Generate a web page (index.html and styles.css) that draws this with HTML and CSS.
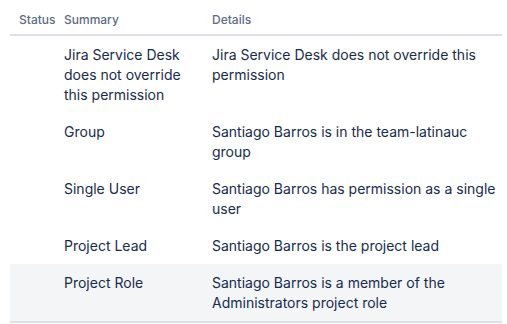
FILE: index.html
```html
<!DOCTYPE html>
<html lang="en">
<head>
  <meta charset="UTF-8" />
  <title>Permission details</title>
  <link rel="stylesheet" href="styles.css">
</head>
<body>
  <table class="perm-table">
    <colgroup>
      <col class="col-status">
      <col class="col-summary">
      <col class="col-details">
    </colgroup>
    <thead>
      <tr>
        <th>Status</th>
        <th>Summary</th>
        <th>Details</th>
      </tr>
    </thead>
    <tbody>
      <tr>
        <td></td>
        <td>Jira Service Desk does not override this permission</td>
        <td>Jira Service Desk does not override this permission</td>
      </tr>
      <tr>
        <td></td>
        <td>Group</td>
        <td>Santiago Barros is in the team-latinauc group</td>
      </tr>
      <tr>
        <td></td>
        <td>Single User</td>
        <td>Santiago Barros has permission as a single user</td>
      </tr>
      <tr>
        <td></td>
        <td>Project Lead</td>
        <td>Santiago Barros is the project lead</td>
      </tr>
      <tr class="highlight">
        <td></td>
        <td>Project Role</td>
        <td>Santiago Barros is a member of the Administrators project role</td>
      </tr>
    </tbody>
  </table>
</body>
</html>
```

FILE: styles.css
```css
* {
  box-sizing: border-box;
}

body {
  margin: 0;
  padding: 0 5px 0 10px;
  font-family: 'Inter', 'Liberation Sans', sans-serif;
  background: #fff;
  color: #172b4d;
}

.perm-table {
  width: 100%;
  border-collapse: collapse;
  table-layout: fixed;
  border-bottom: 2px solid #dfe1e6;
}

.col-status {
  width: 50px;
}

.col-summary {
  width: 148px;
}

.perm-table th {
  text-align: left;
  font-size: 12px;
  font-weight: 500;
  line-height: 16px;
  color: #5e6c84;
  padding: 12px 4px 6px;
  border-bottom: 2px solid #dfe1e6;
}

.perm-table td {
  font-size: 14px;
  line-height: 20px;
  padding: 9px 4px 8px;
  vertical-align: top;
}

.perm-table th:first-child,
.perm-table td:first-child {
  padding-left: 9px;
  padding-right: 0;
}

.perm-table tr.highlight td {
  background: #f4f5f7;
}
```
